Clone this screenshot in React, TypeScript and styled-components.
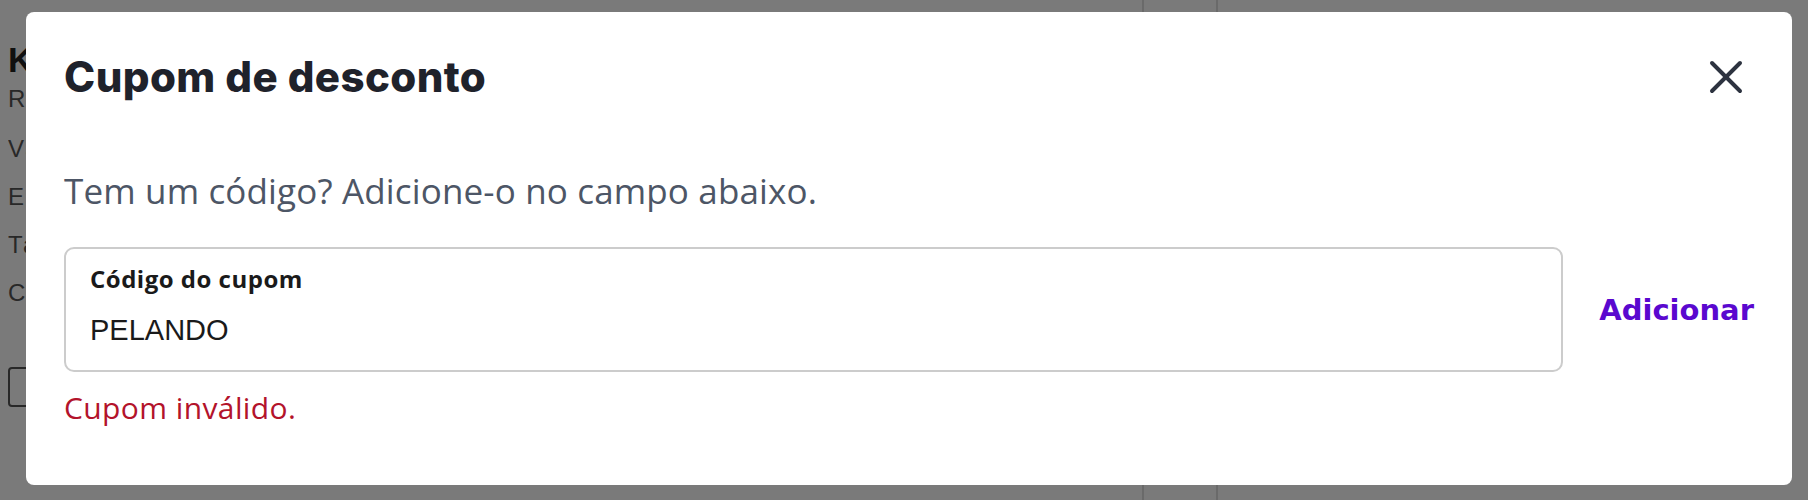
import React, { useState } from "react";
import styled, { createGlobalStyle } from "styled-components";
import { X } from "lucide-react";

/* ===================== STYLES ===================== */

const GlobalStyle = createGlobalStyle`
  html, body {
    margin: 0;
    padding: 0;
    background: #ffffff;
  }
  * {
    box-sizing: border-box;
  }
`;

/* page behind the modal */

const Page = styled.div`
  display: grid;
  grid-template-columns: 26px 1118px 74px 1fr;
  height: 500px;
  overflow: hidden;
  font-family: "Liberation Sans", Arial, sans-serif;
`;

const Column = styled.div`
  border-right: 2px solid #dddddd;
`;

const Summary = styled.div`
  display: flex;
  flex-direction: column;
  padding: 40px 0 0 8px;
  overflow: hidden;
`;

const ProductName = styled.div`
  font-size: 35px;
  font-weight: 700;
  line-height: 40px;
  color: #222222;
  white-space: nowrap;
  overflow: hidden;
`;

const Seller = styled.div`
  font-size: 24px;
  line-height: 28px;
  letter-spacing: 3px;
  color: #555555;
  margin: 5px 0 12px;
  white-space: nowrap;
  overflow: hidden;
`;

const InfoLine = styled.div`
  font-size: 24px;
  line-height: 48px;
  letter-spacing: 3px;
  color: #555555;
  white-space: nowrap;
  overflow: hidden;
`;

const FakeField = styled.div`
  width: 320px;
  height: 40px;
  margin-top: 50px;
  border: 2px solid #555555;
  border-radius: 4px;
  flex-shrink: 0;
`;

/* modal */

const Overlay = styled.div`
  position: fixed;
  inset: 0;
  background: rgba(0, 0, 0, 0.52);
  display: flex;
  padding: 12px 16px 15px 26px;
`;

const Modal = styled.div`
  flex: 1;
  background: #ffffff;
  border-radius: 8px;
  padding: 37px 38px 0 38px;
  display: flex;
  flex-direction: column;
`;

const Header = styled.div`
  display: flex;
  align-items: center;
  justify-content: space-between;
  height: 56px;
`;

const Title = styled.h2`
  margin: 0;
  font-family: Inter, "Noto Sans", sans-serif;
  font-size: 42px;
  font-weight: 800;
  letter-spacing: 0.4px;
  line-height: 48px;
  color: #1f222b;
`;

const CloseButton = styled.button`
  width: 56px;
  height: 56px;
  padding: 0;
  border: none;
  background: none;
  color: #2d3340;
  display: flex;
  align-items: center;
  justify-content: center;
  cursor: pointer;
`;

const Subtitle = styled.p`
  margin: 64px 0 0;
  font-family: "Open Sans", "Noto Sans", sans-serif;
  font-size: 35px;
  letter-spacing: 0.15px;
  line-height: 44px;
  color: #4d5666;
`;

const Row = styled.div`
  display: flex;
  align-items: center;
  gap: 36px;
  margin-top: 34px;
`;

const Field = styled.label`
  flex: 1;
  display: flex;
  flex-direction: column;
  gap: 19px;
  padding: 16px 24px 22px;
  border: 2px solid #cccccc;
  border-radius: 10px;
`;

const FieldLabel = styled.span`
  font-family: "Open Sans", "Noto Sans", sans-serif;
  font-size: 24px;
  font-weight: 700;
  letter-spacing: 0.5px;
  line-height: 28px;
  color: #1a1a1a;
`;

const FieldInput = styled.input`
  border: none;
  outline: none;
  padding: 0;
  height: 36px;
  font-family: "Liberation Sans", Arial, sans-serif;
  font-size: 29px;
  line-height: 36px;
  color: #1a1a1a;
  background: transparent;
`;

const AddButton = styled.button`
  border: none;
  background: none;
  padding: 0;
  font-family: "DejaVu Sans", Verdana, sans-serif;
  font-size: 29px;
  font-weight: 700;
  color: #5a08cf;
  cursor: pointer;
`;

const ErrorText = styled.p`
  margin: 19px 0 0;
  font-family: "Open Sans", "Noto Sans", sans-serif;
  font-size: 30px;
  letter-spacing: 0.4px;
  line-height: 34px;
  color: #b3132b;
`;

/* ===================== COMPONENT ===================== */

const App: React.FC = () => {
  const [code, setCode] = useState("PELANDO");

  return (
    <>
      <GlobalStyle />
      <Page>
        <Summary>
          <ProductName>Kit Teclado e Mouse</ProductName>
          <Seller>Revendido por Loja</Seller>
          <InfoLine>Valor</InfoLine>
          <InfoLine>Entrega</InfoLine>
          <InfoLine>Taxas</InfoLine>
          <InfoLine>Cupom</InfoLine>
          <FakeField />
        </Summary>
        <Column />
        <Column />
        <div />
      </Page>

      <Overlay>
        <Modal role="dialog" aria-labelledby="coupon-title">
          <Header>
            <Title id="coupon-title">Cupom de desconto</Title>
            <CloseButton aria-label="Fechar">
              <X size={56} strokeWidth={1.7} />
            </CloseButton>
          </Header>

          <Subtitle>Tem um código? Adicione-o no campo abaixo.</Subtitle>

          <Row>
            <Field>
              <FieldLabel>Código do cupom</FieldLabel>
              <FieldInput value={code} onChange={(e) => setCode(e.target.value)} />
            </Field>
            <AddButton>Adicionar</AddButton>
          </Row>

          <ErrorText>Cupom inválido.</ErrorText>
        </Modal>
      </Overlay>
    </>
  );
};

export default App;
